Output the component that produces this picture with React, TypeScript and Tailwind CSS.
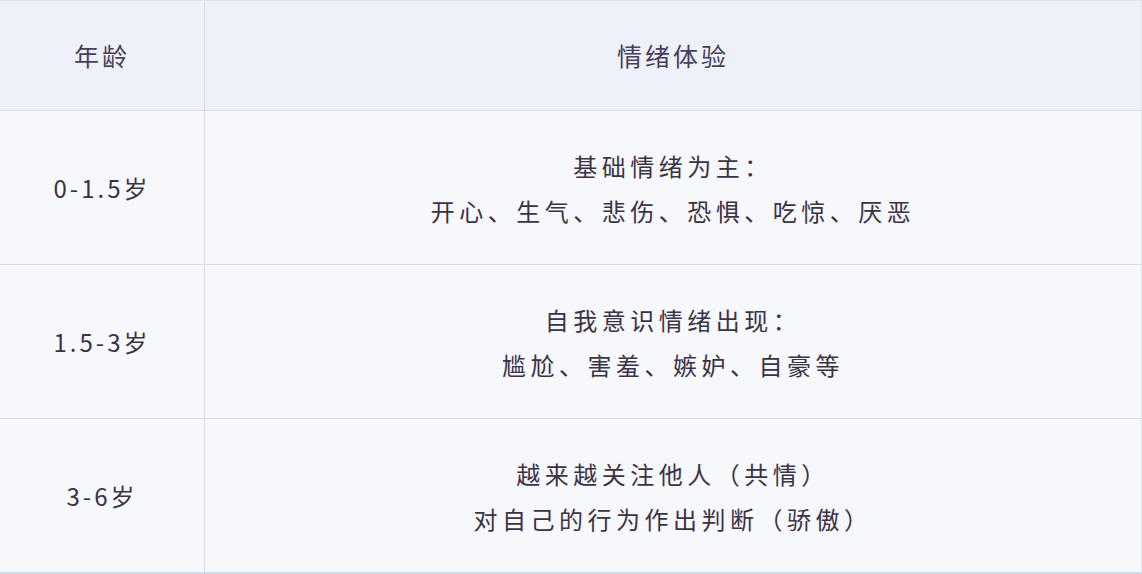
const rows = [
  { age: '0-1.5岁', lines: ['基础情绪为主：', '开心、生气、悲伤、恐惧、吃惊、厌恶'] },
  { age: '1.5-3岁', lines: ['自我意识情绪出现：', '尴尬、害羞、嫉妒、自豪等'] },
  { age: '3-6岁', lines: ['越来越关注他人（共情）', '对自己的行为作出判断（骄傲）'] },
]

const font = "font-['Noto_Sans_CJK_SC','Noto_Sans',sans-serif]"

export default function App() {
  return (
    <div className={`w-[1142px] h-[574px] bg-[#f7f8fb] text-[#3a3346] ${font}`}>
      <div className="h-full border-t border-t-[#dbe6ef] border-b-2 border-b-[#cfdde8] border-r border-r-[#e1e7ee] flex flex-col">
        {/* Header */}
        <div className="h-[110px] shrink-0 flex bg-[#eef2f8] border-b border-[#d5dbe3] text-[#45405e]">
          <div className="w-[205px] shrink-0 border-r border-[#d5dbe3] flex items-center justify-center text-[25px] tracking-[3px]">
            年龄
          </div>
          <div className="flex-1 flex items-center justify-center text-[25px] tracking-[3px]">
            情绪体验
          </div>
        </div>

        {rows.map((row, i) => (
          <div
            key={row.age}
            className={`flex-1 flex ${i < rows.length - 1 ? 'border-b border-[#d9dee5]' : ''}`}
          >
            <div className="w-[205px] shrink-0 border-r border-[#d9dee5] flex items-center justify-center text-[24px] tracking-[3px]">
              {row.age}
            </div>
            <div className="flex-1 flex flex-col items-center justify-center text-[24px] leading-[45px] tracking-[4.5px]">
              {row.lines.map(l => (
                <p key={l}>{l}</p>
              ))}
            </div>
          </div>
        ))}
      </div>
    </div>
  )
}
